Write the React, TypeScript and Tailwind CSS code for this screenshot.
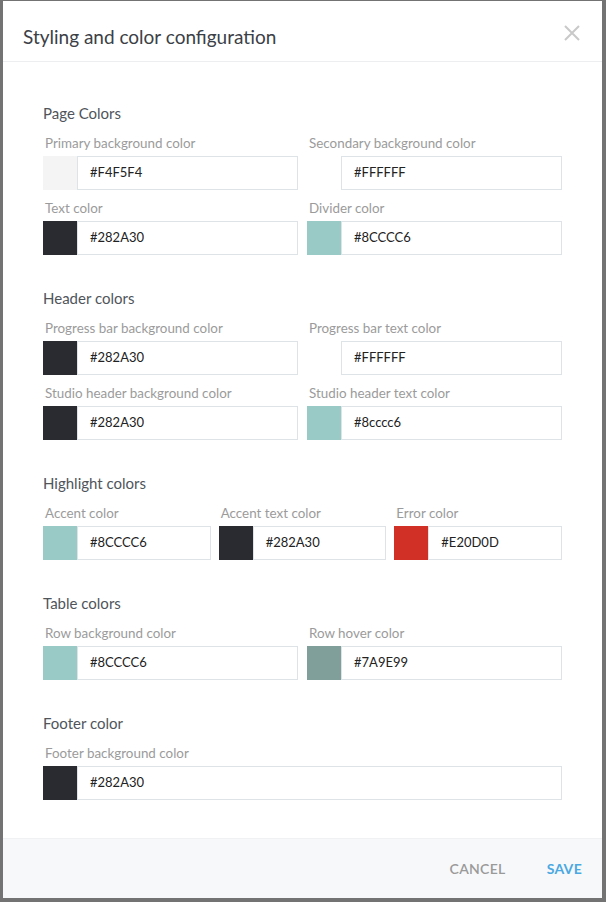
import React from "react";

type F = { label: string; value: string; swatch: string };

const Field = ({ label, value, swatch }: F) => (
  <div className="flex flex-col min-w-0">
    <div className="h-[18px] leading-[18px] pl-[2px] text-[13.4px] text-[#9b9b9b] mb-[4px] whitespace-nowrap">{label}</div>
    <div className="flex h-[34px]">
      <div className="w-[34px] h-[34px] shrink-0" style={{ backgroundColor: swatch }} />
      <div className="flex-1 h-[34px] border border-[#dde3e6] flex items-center pl-[12px] text-[13px] text-[#222222]">
        {value}
      </div>
    </div>
  </div>
);

const Section = ({ title, cols, fields }: { title: string; cols: 1 | 2 | 3; fields: F[] }) => (
  <div className="flex flex-col">
    <div className="h-[20px] leading-[20px] text-[15px] text-[#4f555b]">{title}</div>
    <div
      className={
        cols === 3
          ? "grid grid-cols-3 gap-x-[8px] gap-y-[9px] mt-[11px]"
          : cols === 2
          ? "grid grid-cols-2 gap-x-[9px] gap-y-[9px] mt-[11px]"
          : "grid grid-cols-1 gap-y-[9px] mt-[11px]"
      }
    >
      {fields.map((f, i) => (
        <Field key={i} {...f} />
      ))}
    </div>
  </div>
);

export default function App() {
  return (
    <div
      className="w-[606px] h-[902px] bg-[#737373] pl-[3px] pr-[4px] pt-[1px] pb-[4px]"
      style={{ fontFamily: "Lato, 'Open Sans', sans-serif" }}
    >
      <div className="w-full h-full bg-white flex flex-col">
        <div className="h-[61px] shrink-0 border-b border-[#eceeef] flex justify-between pl-[20px] pr-[22px]">
          <div className="mt-[23px] h-[26px] leading-[26px] text-[19px] text-[#3b4046]">
            Styling and color configuration
          </div>
          <svg className="mt-[24px]" width="16" height="16" viewBox="0 0 16 16">
            <path d="M1 1 L15 15 M15 1 L1 15" stroke="#c9c9c9" strokeWidth="2" fill="none" />
          </svg>
        </div>
        <div className="flex-1 flex flex-col gap-[33px] px-[40px] pt-[41px]">
          <Section
            title="Page Colors"
            cols={2}
            fields={[
              { label: "Primary background color", value: "#F4F5F4", swatch: "#f4f4f4" },
              { label: "Secondary background color", value: "#FFFFFF", swatch: "#ffffff" },
              { label: "Text color", value: "#282A30", swatch: "#2a2b30" },
              { label: "Divider color", value: "#8CCCC6", swatch: "#9acac6" },
            ]}
          />
          <Section
            title="Header colors"
            cols={2}
            fields={[
              { label: "Progress bar background color", value: "#282A30", swatch: "#2a2b30" },
              { label: "Progress bar text color", value: "#FFFFFF", swatch: "#ffffff" },
              { label: "Studio header background color", value: "#282A30", swatch: "#2a2b30" },
              { label: "Studio header text color", value: "#8cccc6", swatch: "#9acac6" },
            ]}
          />
          <Section
            title="Highlight colors"
            cols={3}
            fields={[
              { label: "Accent color", value: "#8CCCC6", swatch: "#9acac6" },
              { label: "Accent text color", value: "#282A30", swatch: "#2a2b30" },
              { label: "Error color", value: "#E20D0D", swatch: "#d13027" },
            ]}
          />
          <Section
            title="Table colors"
            cols={2}
            fields={[
              { label: "Row background color", value: "#8CCCC6", swatch: "#9acac6" },
              { label: "Row hover color", value: "#7A9E99", swatch: "#819f9a" },
            ]}
          />
          <Section
            title="Footer color"
            cols={1}
            fields={[{ label: "Footer background color", value: "#282A30", swatch: "#2a2b30" }]}
          />
        </div>
        <div className="h-[60px] shrink-0 bg-[#f7f8f9] border-t border-[#eff1f2] flex items-center justify-end gap-[41px] pr-[20px]">
          <span className="text-[14px] font-semibold text-[#9a9a9a] tracking-[0.3px]">CANCEL</span>
          <span className="text-[14px] font-bold text-[#4aa8e2] tracking-[0.3px]">SAVE</span>
        </div>
      </div>
    </div>
  );
}
